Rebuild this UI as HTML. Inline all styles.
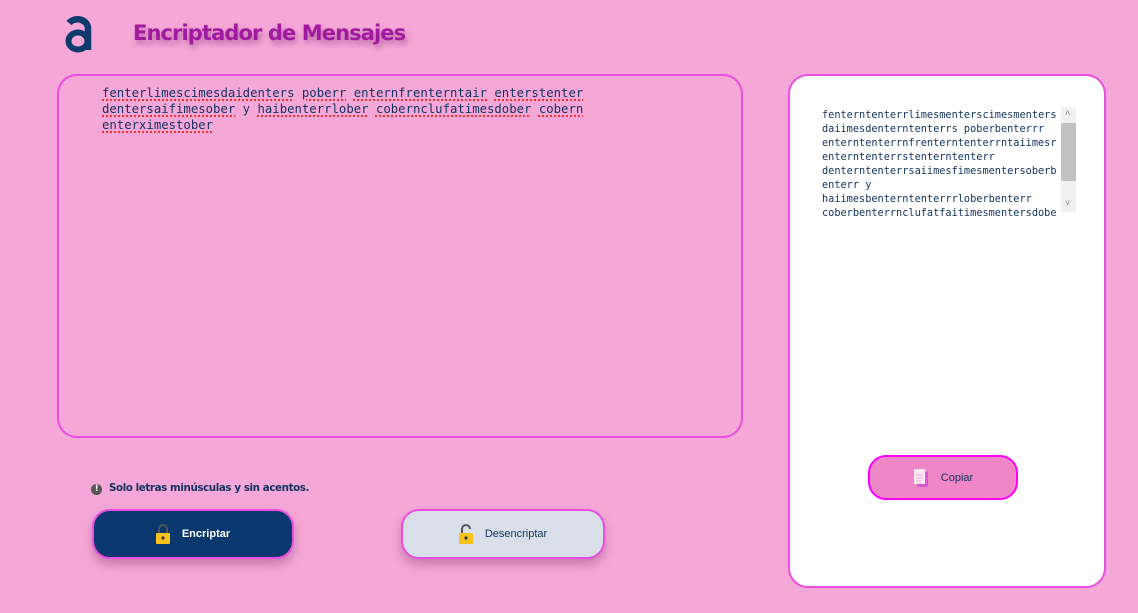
<!DOCTYPE html>
<html><head><meta charset="utf-8"><style>
body{margin:0;width:1138px;height:613px;background:#f5a7d7;position:relative;overflow:hidden;font-family:"Liberation Sans",sans-serif}
.abs{position:absolute}
h1{position:absolute;left:133px;top:21px;margin:0;font:bold 21px "DejaVu Sans",sans-serif;color:#a0199f;text-shadow:2px 4px 6px rgba(110,30,110,.45);letter-spacing:-0.9px}
.ta{left:57px;top:74px;width:682px;height:360px;border:2px solid #e94ee0;border-radius:20px}
.txt{left:102px;top:85px;font:12.3px/16px "DejaVu Sans Mono",monospace;color:#12325f;white-space:pre}
.txt span{text-decoration:underline dotted #e33;text-decoration-thickness:2px;text-underline-offset:2px}
.panel{left:788px;top:74px;width:314px;height:510px;background:#fff;border:2px solid #e94ee0;border-radius:20px}
.out{left:822px;top:108px;font:10.25px/14px "DejaVu Sans Mono",monospace;color:#12325f;white-space:pre}
.sb{left:1061px;top:107px;width:15px;height:105px;background:#f1f1f1;font-size:9px;color:#888;text-align:center}
.sb div{position:absolute;left:0;top:16px;width:15px;height:58px;background:#c1c1c1}
.note{left:91px;top:482px;font:bold 10.3px "DejaVu Sans",sans-serif;color:#12325f;letter-spacing:-0.4px}
.btn{height:46px;border-radius:18px;border:2px solid #e94ee0;box-shadow:0 6px 10px rgba(120,40,100,.35);display:flex;align-items:center;justify-content:center;font:bold 11px "Liberation Sans",sans-serif;gap:12px}
</style></head><body>
<svg class="abs" style="left:60px;top:10px" width="40" height="45" viewBox="0 0 40 45"><path d="M9 13 A10.5 9 0 0 1 28 18 V40" fill="none" stroke="#0f3a6e" stroke-width="6.5"/><ellipse cx="18" cy="31" rx="9.5" ry="8.5" fill="none" stroke="#0f3a6e" stroke-width="6"/></svg>
<h1>Encriptador de Mensajes</h1>
<div class="abs ta"></div>
<div class="abs txt"><span>fenterlimescimesdaidenters</span> <span>poberr</span> <span>enternfrenterntair</span> <span>enterstenter</span>
<span>dentersaifimesober</span> y <span>haibenterrlober</span> <span>cobernclufatimesdober</span> <span>cobern</span>
<span>enterximestober</span></div>
<div class="abs panel"></div>
<div class="abs out">fenterntenterrlimesmenterscimesmenters
daiimesdenterntenterrs poberbenterrr
enterntenterrnfrenterntenterrntaiimesr
enterntenterrstenterntenterr
denterntenterrsaiimesfimesmentersoberb
enterr y
haiimesbenterntenterrrloberbenterr
coberbenterrnclufatfaitimesmentersdobe</div>
<div class="abs sb"><span style="position:absolute;left:4px;top:1px">˄</span><div></div><span style="position:absolute;left:4px;top:91px">˅</span></div>
<div class="abs note"><span style="display:inline-block;width:11px;height:11px;border-radius:50%;background:#555;color:#fff;font-size:9px;text-align:center;line-height:11px;margin-right:7px">!</span>Solo letras minúsculas y sin acentos.</div>
<div class="abs btn" style="left:92px;top:509px;width:198px;background:#0a376e;color:#fff">
<svg width="14" height="20" viewBox="0 0 14 20"><path d="M3 9V5a4 4 0 0 1 8 0v4" fill="none" stroke="#555" stroke-width="2"/><rect x="0" y="9" width="14" height="11" rx="1" fill="#f7c21c"/><circle cx="7" cy="14" r="1.6" fill="#333"/></svg>Encriptar</div>
<div class="abs btn" style="left:401px;top:509px;width:200px;background:#d8dfe9;color:#12325f;font-weight:normal">
<svg width="14" height="20" viewBox="0 0 14 20"><path d="M3 9V5a4 4 0 0 1 8 0" fill="none" stroke="#555" stroke-width="2"/><rect x="0" y="9" width="14" height="11" rx="1" fill="#f7c21c"/><circle cx="7" cy="14" r="1.6" fill="#333"/></svg>Desencriptar</div>
<div class="abs btn" style="left:868px;top:455px;width:146px;height:41px;border:2px solid #f0f;background:#ef86c6;color:#12325f;box-shadow:none;font-weight:normal">
<svg width="16" height="18" viewBox="0 0 16 18"><rect x="4" y="3" width="11" height="15" fill="#d65ad8"/><rect x="1" y="0" width="11" height="15" fill="#fde8f4"/><path d="M3 6h7M3 9h7M3 12h5" stroke="#e9a6d8"/></svg>Copiar</div>
</body></html>
